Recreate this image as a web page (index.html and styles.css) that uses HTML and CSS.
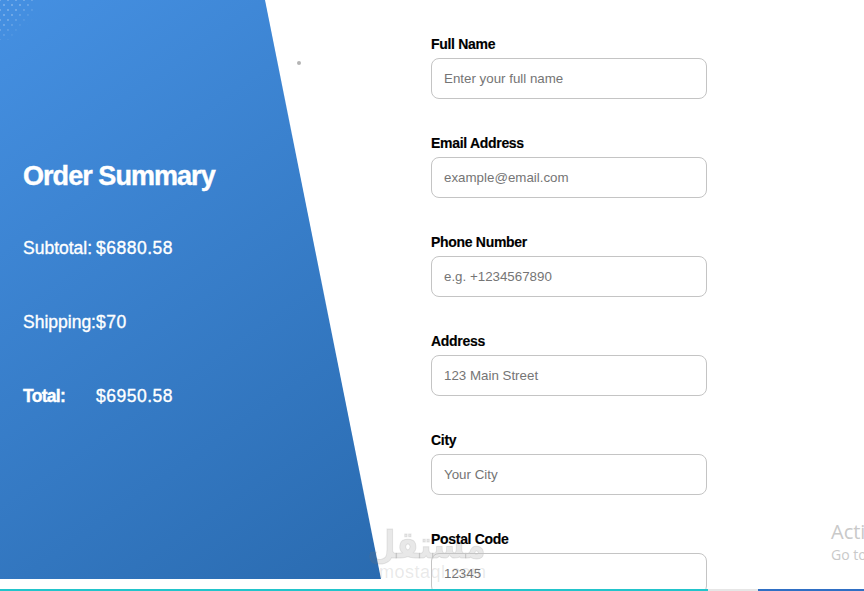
FILE: index.html
```html
<!DOCTYPE html>
<html lang="en">
<head>
<meta charset="utf-8">
<title>Checkout</title>
<link rel="stylesheet" href="styles.css">
</head>
<body>
<div class="page">
  <main class="main">
    <aside class="summary">
      <div class="dots"></div>
      <h2 class="summary-title">Order Summary</h2>
      <div class="summary-rows">
        <p class="row"><span>Subtotal:</span><span class="val">$6880.58</span></p>
        <p class="row"><span>Shipping:</span><span class="val">$70</span></p>
        <p class="row"><span class="total-label">Total:</span><span class="val">$6950.58</span></p>
      </div>
    </aside>
    <span class="speck"></span>
    <div class="watermark">
      <div class="wm-ar">مستقل</div>
      <div class="wm-en">mostaql.com</div>
    </div>
    <form class="form">
      <div class="field"><label class="label">Full Name</label><input class="input" placeholder="Enter your full name"></div>
      <div class="field"><label class="label">Email Address</label><input class="input" placeholder="example@email.com"></div>
      <div class="field"><label class="label">Phone Number</label><input class="input" placeholder="e.g. +1234567890"></div>
      <div class="field"><label class="label">Address</label><input class="input" placeholder="123 Main Street"></div>
      <div class="field"><label class="label">City</label><input class="input" placeholder="Your City"></div>
      <div class="field"><label class="label">Postal Code</label><input class="input" placeholder="12345"></div>
    </form>
    <div class="activate">
      <div class="act-1">Activate Windows</div>
      <div class="act-2">Go to Settings to activate Windows.</div>
    </div>
  </main>
  <div class="strip">
    <div class="strip-teal"></div>
    <div class="strip-grey"></div>
    <div class="strip-blue"></div>
  </div>
</div>
</body>
</html>
```
FILE: styles.css
```css
* { box-sizing: border-box; }
html, body { margin: 0; height: 100%; overflow: hidden; background: #fff; }
.page { width: 864px; height: 591px; display: flex; flex-direction: column; overflow: hidden; }
.main { position: relative; flex: 1; min-height: 0; display: flex; overflow: hidden; }
.summary {
  position: relative;
  flex: none;
  width: 381px;
  height: 579px;
  padding: 158px 0 0 23px;
  color: #fff;
  background: linear-gradient(145deg, #4590e2 0%, #2a6bb0 100%);
  clip-path: polygon(0 0, 265px 0, 100% 100%, 0 100%);
  font-family: "Liberation Sans", Arial, sans-serif;
}
.dots {
  position: absolute;
  left: 0;
  top: 0;
  width: 34px;
  height: 40px;
  background-image:
    radial-gradient(circle, rgba(255,255,255,.32) .6px, transparent 1px),
    radial-gradient(circle, rgba(255,255,255,.32) .6px, transparent 1px);
  background-size: 8px 10px;
  background-position: 0 0, 4px 5px;
  -webkit-mask-image: linear-gradient(135deg, #000 35%, transparent 72%);
  mask-image: linear-gradient(135deg, #000 35%, transparent 72%);
}
.summary-title { margin: 1px 0 0; font-size: 27px; line-height: 34px; font-weight: 700; letter-spacing: -.95px; -webkit-text-stroke: .4px #fff; }
.summary-rows { margin-top: 46px; display: flex; flex-direction: column; gap: 56px; }
.row { margin: 0; display: flex; font-size: 17.5px; line-height: 18px; -webkit-text-stroke: .35px #fff; }
.row span:first-child { width: 73px; }
.val { letter-spacing: .5px; }
.total-label { font-weight: 700; letter-spacing: -.7px; }
.speck { position: absolute; left: 297px; top: 61px; width: 4px; height: 4px; border-radius: 50%; background: #b4b4b4; }
.form { position: relative; margin-left: 50px; padding-top: 36px; width: 276px; flex: none; display: flex; flex-direction: column; gap: 36px; font-family: "Liberation Sans", Arial, sans-serif; }
.field { display: flex; flex-direction: column; gap: 6px; flex: none; }
.label { font-size: 14px; line-height: 16px; font-weight: 700; color: #000; letter-spacing: -.3px; -webkit-text-stroke: .15px #000; }
.input {
  width: 276px;
  height: 41px;
  flex: none;
  padding: 0 12px;
  border: 1px solid #c4c4c4;
  border-radius: 8px;
  font: 13.33px "Liberation Sans", Arial, sans-serif;
  background: transparent;
  outline: none;
}
.input::placeholder { color: #757575; opacity: 1; }
.watermark { position: absolute; left: 379px; top: 526px; width: 106px; text-align: center; color: rgba(120,120,120,.17); pointer-events: none; }
.wm-ar { margin-left: -21px; font: 700 38px/38px "DejaVu Sans", sans-serif; transform: scaleX(.85); -webkit-text-stroke: 1px rgba(120,120,120,.17); }
.wm-en { font: 18px/16px "Liberation Sans", sans-serif; letter-spacing: .5px; white-space: nowrap; }
.activate { position: absolute; left: 831px; top: 520px; white-space: nowrap; color: #c9c9c9; font-family: "Open Sans", "Liberation Sans", sans-serif; }
.act-1 { font-size: 20px; line-height: 24px; }
.act-2 { font-size: 14px; line-height: 21px; }
.strip { flex: none; height: 2px; display: flex; }
.strip-teal { width: 708px; background: #22c4cb; }
.strip-grey { width: 50px; background: #e6e6e6; }
.strip-blue { flex: 1; background: #2f6fc4; }
```
